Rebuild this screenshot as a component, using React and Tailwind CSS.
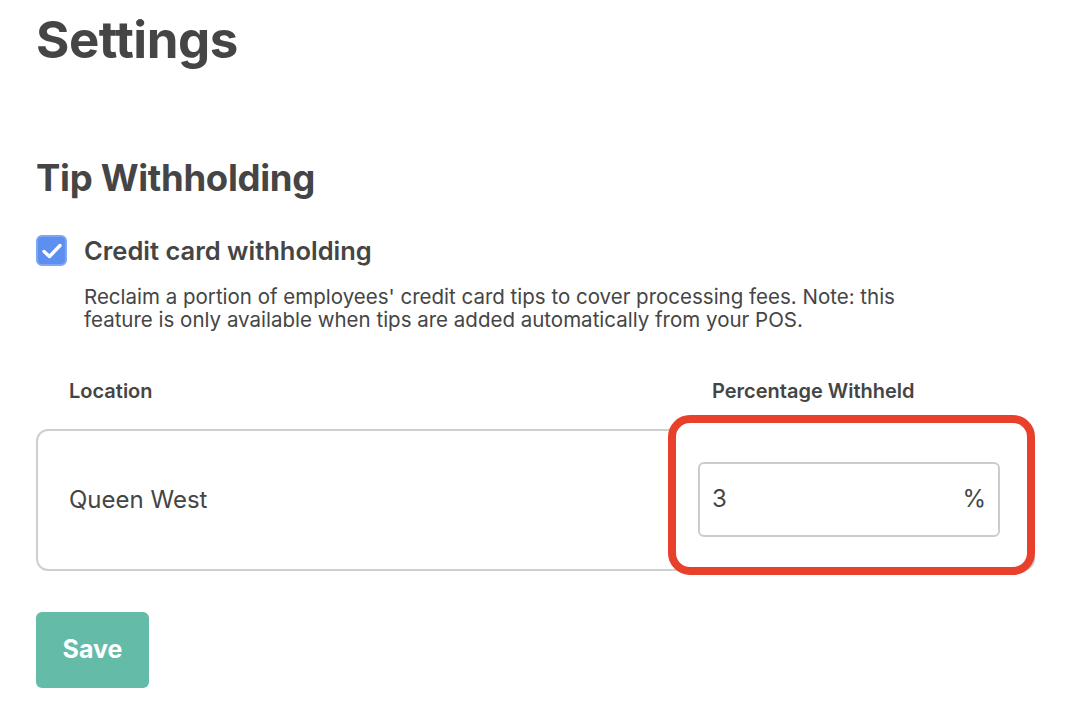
import React from 'react';

function Checkbox() {
    return (
        <div className="w-[31px] h-[31px] rounded-[6px] bg-[#5d8ff0] border-2 border-[#7ea6f3] flex items-center justify-center shrink-0">
            <svg width="22" height="18" viewBox="0 0 22 18" fill="none">
                <path d="M3 9.5 L8.5 14.5 L19 3.5" stroke="white" strokeWidth="3.4" strokeLinecap="round" strokeLinejoin="round" />
            </svg>
        </div>
    );
}

export default function App() {
    return (
        <div className="min-h-[706px] bg-white text-[#454545] pl-[36px] pr-[33px]" style={{ fontFamily: 'Inter, "Open Sans", sans-serif' }}>
            <h1 className="text-[51px] font-bold leading-none pt-[14px] tracking-[-0.5px]">Settings</h1>

            <h2 className="text-[36.5px] font-bold leading-none mt-[95px] tracking-[-0.3px]">Tip Withholding</h2>

            <div className="flex items-center gap-[17px] mt-[35px]">
                <Checkbox />
                <span className="text-[25.5px] font-semibold">Credit card withholding</span>
            </div>
            <p className="ml-[48px] mt-[15px] text-[20.5px] leading-[23px] text-[#454545] max-w-[880px]">
                Reclaim a portion of employees' credit card tips to cover processing fees. Note: this feature is only available when tips are added automatically from your POS.
            </p>

            <div className="flex mt-[45px] text-[20px] font-semibold">
                <div className="pl-[33px] flex-1">Location</div>
                <div className="w-[323px]">Percentage Withheld</div>
            </div>

            <div className="relative mt-[23px] h-[142px] border-2 border-[#cfcfcf] rounded-[12px] flex items-center">
                <div className="pl-[31px] flex-1 text-[24px]">Queen West</div>
                <div className="absolute left-[630px] top-[-16px] w-[367px] h-[160px] border-[8px] border-[#e8402a] rounded-[22px] bg-white pt-[39px] pl-[22px]">
                    <div className="w-[302px] h-[75px] border-2 border-[#cccccc] rounded-[6px] flex items-center justify-between px-[12px] text-[24px]">
                        <span>3</span>
                        <span>%</span>
                    </div>
                </div>
            </div>

            <button className="mt-[41px] w-[113px] h-[76px] rounded-[6px] bg-[#63bba8] text-white text-[25px] font-bold">
                Save
            </button>
        </div>
    );
}
